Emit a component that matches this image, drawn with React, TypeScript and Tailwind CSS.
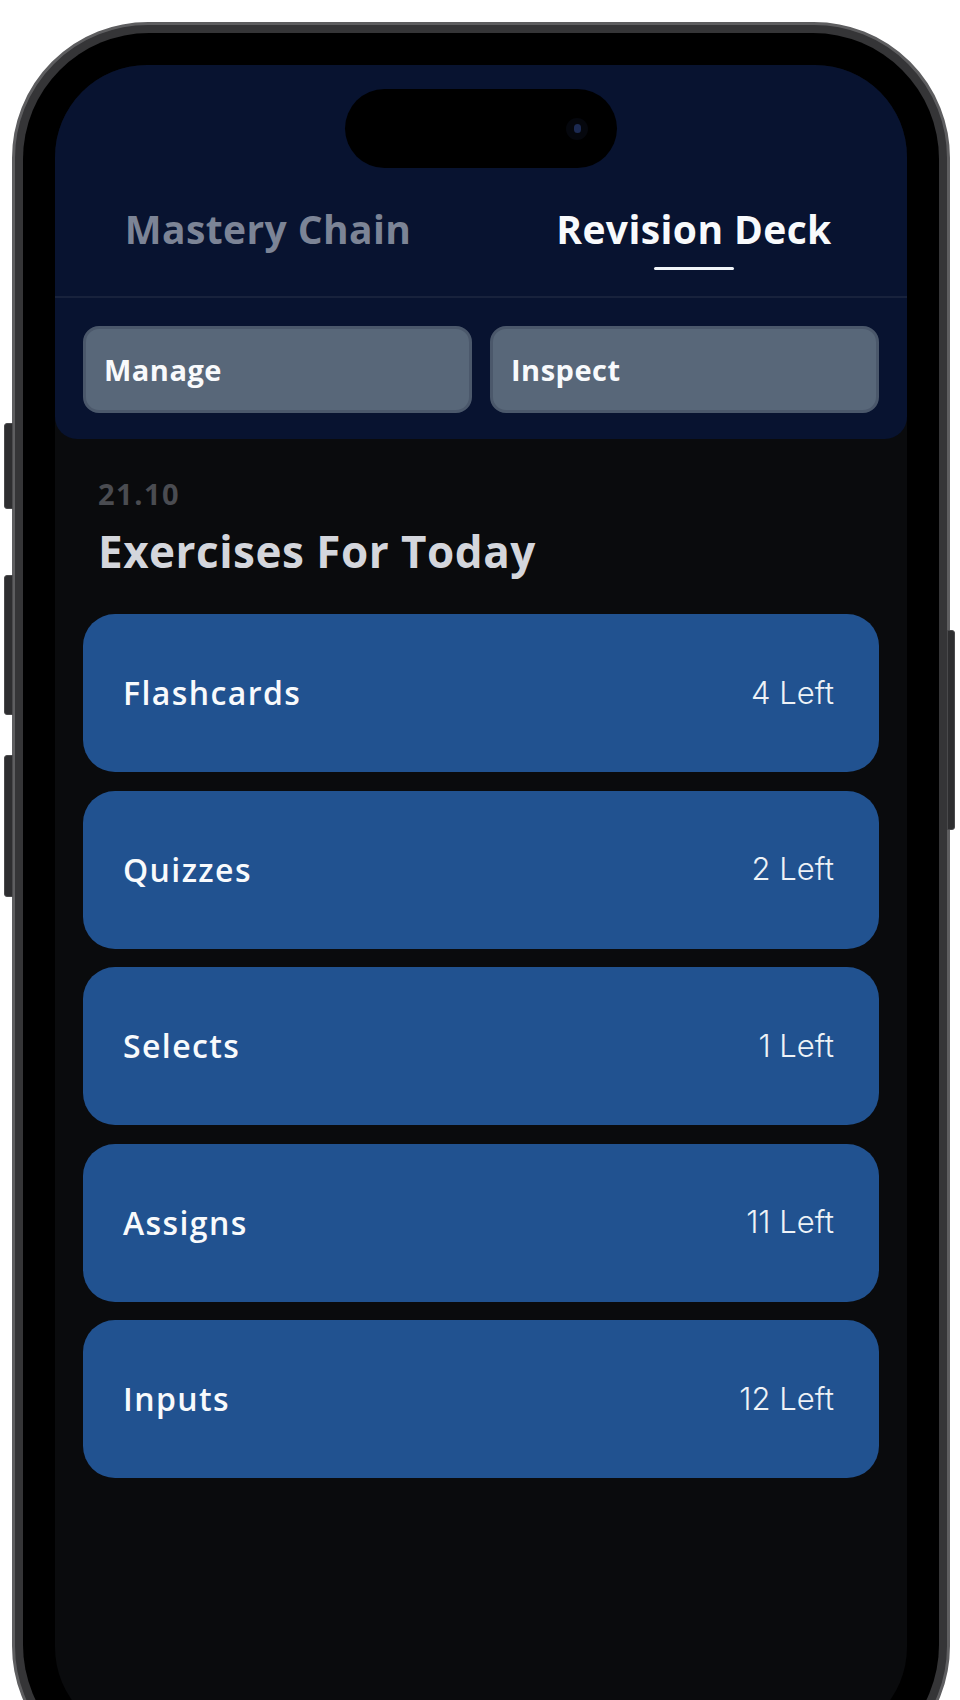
const exercises = [
  { name: "Flashcards", left: 4 },
  { name: "Quizzes", left: 2 },
  { name: "Selects", left: 1 },
  { name: "Assigns", left: 11 },
  { name: "Inputs", left: 12 },
];

const sans = "font-['Open_Sans','Noto_Sans',sans-serif]";

function SideButtons() {
  return (
    <>
      <div className="absolute left-[4px] top-[423px] w-[9px] h-[86px] rounded-l-[3px] bg-[#2e2e30] border border-[#4a4a4c]" />
      <div className="absolute left-[4px] top-[575px] w-[9px] h-[140px] rounded-l-[3px] bg-[#2e2e30] border border-[#4a4a4c]" />
      <div className="absolute left-[4px] top-[755px] w-[9px] h-[142px] rounded-l-[3px] bg-[#2e2e30] border border-[#4a4a4c]" />
      <div className="absolute left-[947px] top-[630px] w-[8px] h-[200px] rounded-r-[3px] bg-[#2e2e30] border border-[#4a4a4c]" />
    </>
  );
}

function Header() {
  return (
    <div className="bg-[#081330] rounded-b-[22px] flex flex-col">
      <div className="mt-[24px] mx-auto w-[272px] h-[79px] rounded-full bg-black flex items-center justify-end pr-[29px]">
        <div className="w-[22px] h-[22px] rounded-full bg-[#05070d] flex items-center justify-center">
          <div className="w-[7px] h-[9px] rounded-full bg-[#1c2a52]" />
        </div>
      </div>

      <div className="flex mt-[38px] pb-[26px] border-b-2 border-[#18223c]">
        <div className="flex-1 flex flex-col items-center">
          <span className={`${sans} text-[39px] leading-[45px] font-bold tracking-[0.4px] text-[#7c8496]`}>
            Mastery Chain
          </span>
          <div className="mt-[16px] h-[3px]" />
        </div>
        <div className="flex-1 flex flex-col items-center">
          <span className={`${sans} text-[39px] leading-[45px] font-bold tracking-[0.4px] text-[#f8fafc]`}>
            Revision Deck
          </span>
          <div className="mt-[16px] w-[80px] h-[3px] rounded-full bg-[#f1f5f9]" />
        </div>
      </div>

      <div className="grid grid-cols-2 gap-[18px] px-[28px] pt-[28px] pb-[26px]">
        {["Manage", "Inspect"].map((label) => (
          <button
            key={label}
            className="h-[87px] rounded-[16px] bg-[#586779] border-[3px] border-[#4b586b] flex items-center px-[18px]"
          >
            <span className={`${sans} text-[29px] font-bold tracking-[0.5px] text-[#f8fafc]`}>{label}</span>
          </button>
        ))}
      </div>
    </div>
  );
}

export default function App() {
  return (
    <div className="relative w-[960px] h-[1700px] bg-white overflow-hidden">
      <SideButtons />
      <div className="ml-[12px] mt-[22px] w-[938px] h-[1760px] rounded-[136px] bg-[#353537] border-[3px] border-[#5e5e60] p-[8px]">
        <div className="h-full rounded-[126px] bg-black p-[32px]">
          <div className="h-full rounded-[92px] overflow-hidden bg-[#0a0b0d] flex flex-col">
            <Header />

            <div className="px-[28px] flex flex-col">
              <span className={`${sans} mt-[38px] pl-[15px] text-[29px] leading-[34px] font-bold tracking-[1.5px] text-[#4a4c51]`}>
                21.10
              </span>
              <h1 className={`${sans} mt-[14px] pl-[15px] text-[44px] leading-[52px] font-bold tracking-[0.5px] text-[#d4d6dc]`}>
                Exercises For Today
              </h1>

              <div className="mt-[37px] flex flex-col gap-[18.5px]">
                {exercises.map((ex) => (
                  <div
                    key={ex.name}
                    className="h-[158px] rounded-[32px] bg-[#215290] flex items-center justify-between pl-[40px] pr-[45px]"
                  >
                    <span className={`${sans} text-[32px] font-semibold tracking-[1.4px] text-[#f8fafc]`}>{ex.name}</span>
                    <span className="font-['Inter',sans-serif] text-[31px] font-light text-[#eef2f7]">
                      {ex.left} Left
                    </span>
                  </div>
                ))}
              </div>
            </div>
          </div>
        </div>
      </div>
    </div>
  );
}
